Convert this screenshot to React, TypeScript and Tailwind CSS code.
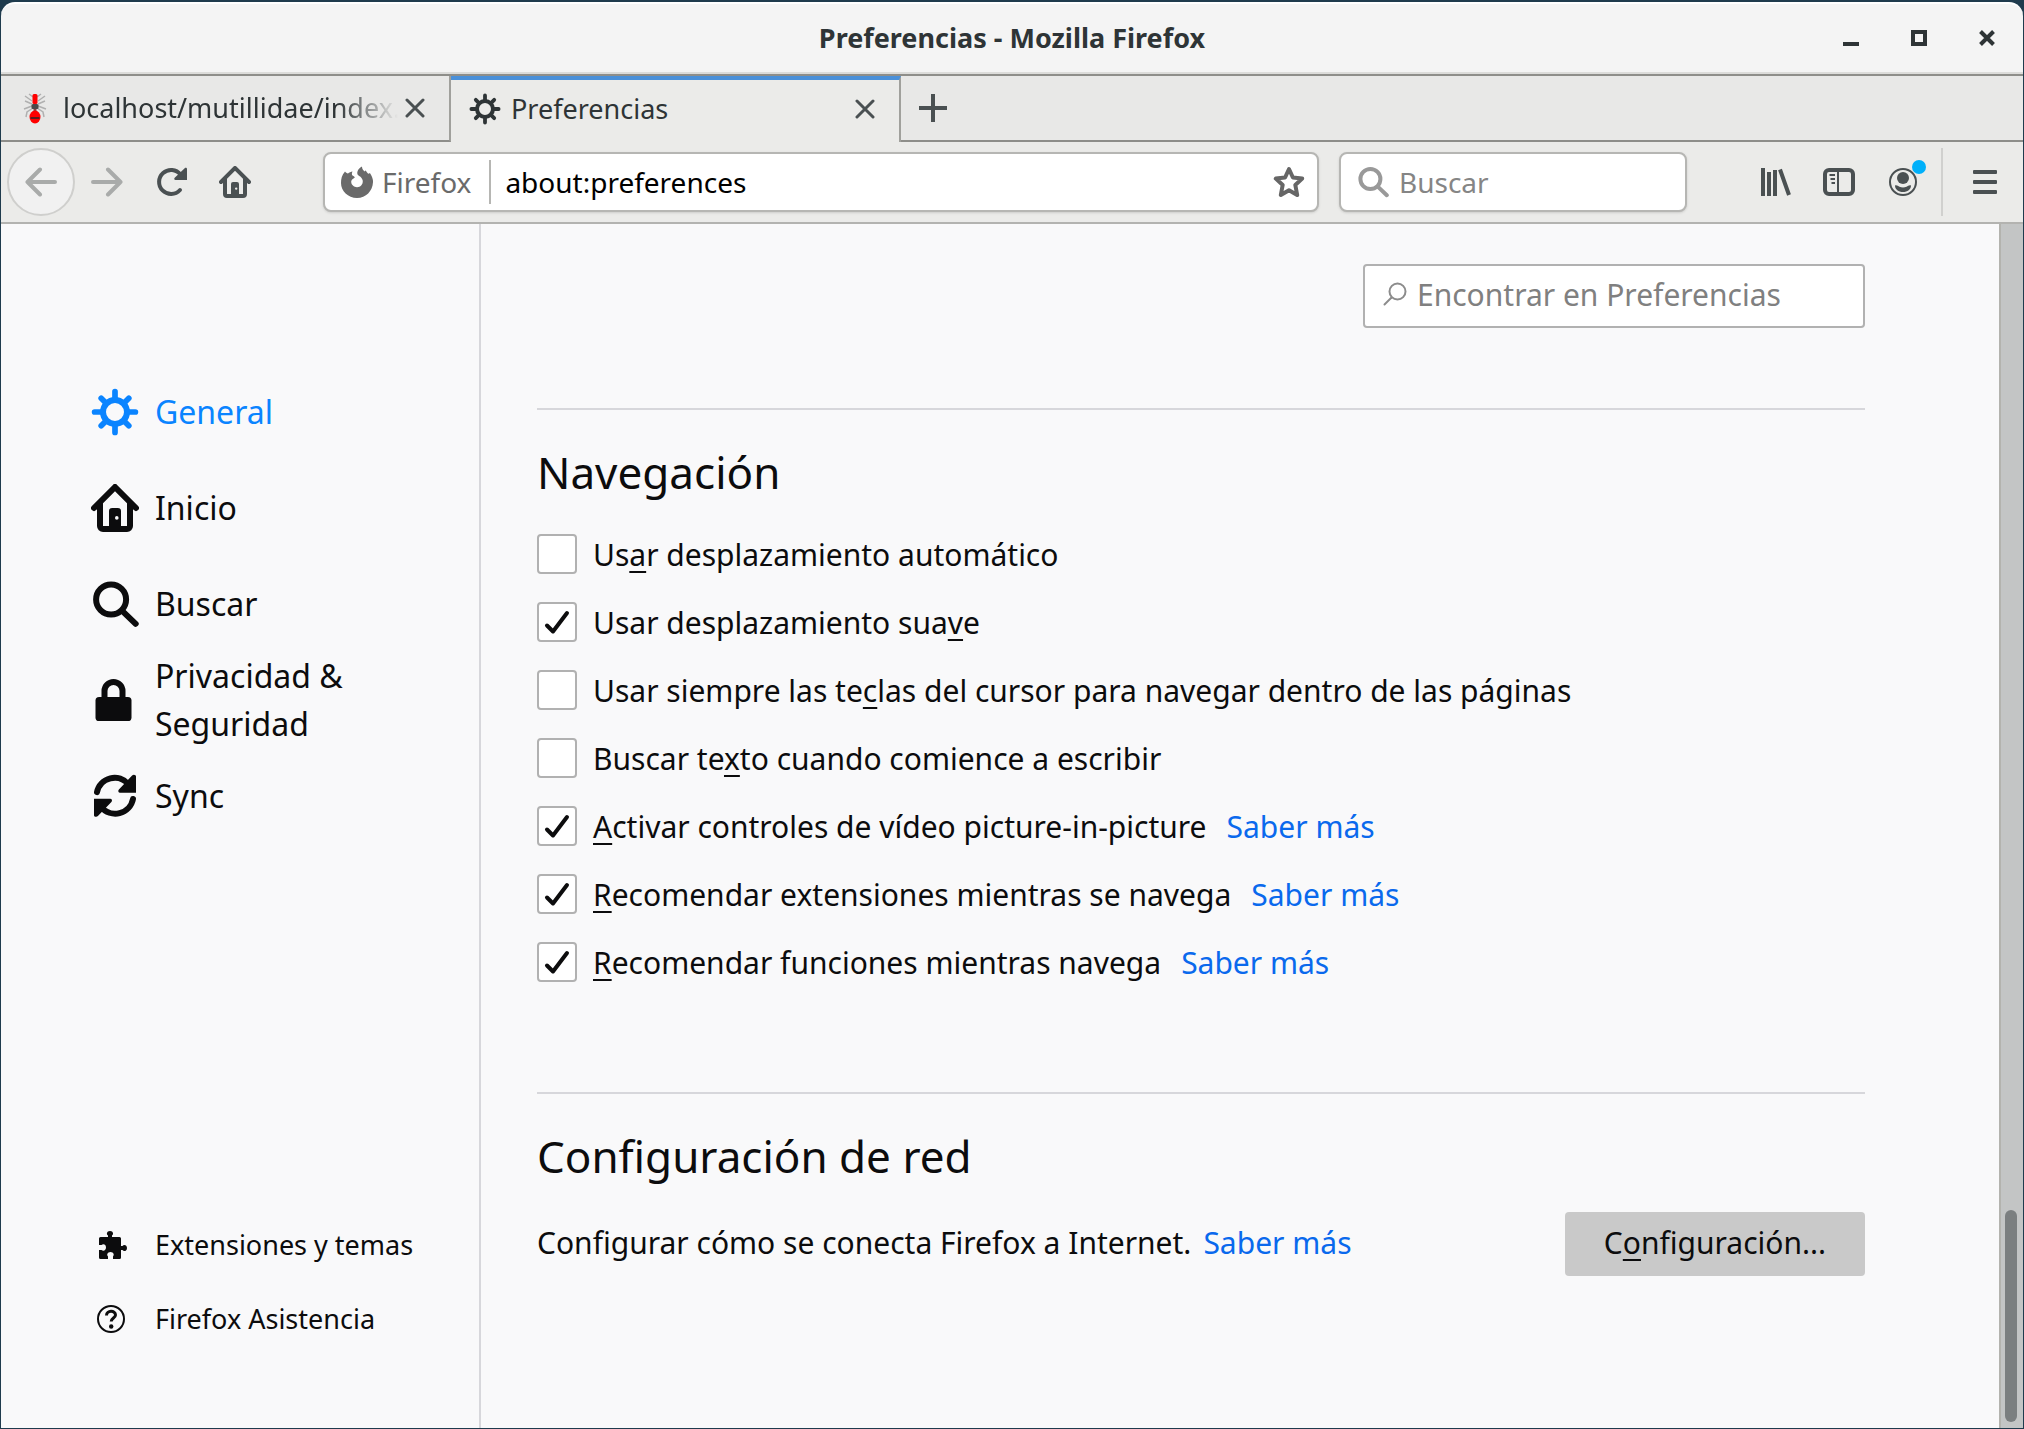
import type { ReactNode } from "react";

type IconProps = { className?: string };

function GearIcon({ className }: IconProps) {
  return (
    <svg viewBox="0 0 16 16" className={className} fill="none" stroke="currentColor" aria-hidden="true">
      <circle cx="8" cy="8" r="4" strokeWidth="2" />
      <path
        d="M8 1.2v2.3M8 12.5v2.3M1.2 8h2.3M12.5 8h2.3M3.4 3.4l1.5 1.5M11.1 11.1l1.5 1.5M3.4 12.6l1.5-1.5M11.1 4.9l1.5-1.5"
        strokeWidth="1.9"
        strokeLinecap="round"
      />
    </svg>
  );
}

function HomeIcon({ className }: IconProps) {
  return (
    <svg viewBox="0 0 16 16" className={className} fill="currentColor" aria-hidden="true">
      <path
        fillRule="evenodd"
        d="M15.707 7.293l-7-7a1 1 0 0 0-1.414 0l-7 7a1 1 0 0 0 1.414 1.414L2 8.414V14a2 2 0 0 0 2 2h8a2 2 0 0 0 2-2V8.414l.293.293a1 1 0 0 0 1.414-1.414zM12 14h-2V9a1 1 0 0 0-1-1H7a1 1 0 0 0-1 1v5H4V6.414l4-4 4 4zM8.6 10.7a.6.6 0 1 1 0 1.2.6.6 0 0 1 0-1.2z"
      />
    </svg>
  );
}

function SearchIcon({ className }: IconProps) {
  return (
    <svg viewBox="0 0 16 16" className={className} fill="none" stroke="currentColor" strokeWidth="2" strokeLinecap="round" aria-hidden="true">
      <circle cx="6.7" cy="6.5" r="5" />
      <path d="M10.4 10.3L14.9 14.6" />
    </svg>
  );
}

function LockIcon({ className }: IconProps) {
  return (
    <svg viewBox="0 0 16 16" className={className} aria-hidden="true">
      <rect x="1.5" y="7" width="12" height="8" rx="1.2" fill="currentColor" />
      <path d="M4.500 8V5a3 3 0 0 1 6 0V8" fill="none" stroke="currentColor" strokeWidth="2" />
    </svg>
  );
}

function SyncIcon({ className }: IconProps) {
  return (
    <svg viewBox="0 0 16 16" className={className} fill="none" stroke="currentColor" strokeWidth="2" aria-hidden="true">
      <path d="M2 6.700a6 6 0 0 1 10.500-2.600" strokeLinecap="round" />
      <path d="M14 9a6 6 0 0 1-10.600 2.600" strokeLinecap="round" />
      <path d="M15 1.500v5.400H9.700c-.6 0-.8-.7-.4-1.100l4.400-4.600c.5-.5 1.300-.2 1.300.3z" fill="currentColor" stroke="none" />
      <path d="M1 14.400V8.900h5.400c.6 0 .8.700.4 1.100l-4.500 4.700c-.5.5-1.300.2-1.300-.3z" fill="currentColor" stroke="none" />
    </svg>
  );
}

function PuzzleIcon({ className }: IconProps) {
  return (
    <svg viewBox="0 0 28 28" className={className} fill="currentColor" aria-hidden="true">
      <path d="M9 6V4.500C7.200 3.500 7.500 0 11 0s3.800 3.500 2 4.500V6h7.500A1.500 1.500 0 0 1 22 7.500V15h1.500c1-1.800 4.500-1.500 4.500 2s-3.500 3.800-4.500 2H22v7.500a1.500 1.500 0 0 1-1.500 1.500H14v-2.500c1.600-1.600.6-4.500-2.500-4.500s-4.100 2.900-2.500 4.500V28H1.500A1.500 1.500 0 0 1 0 26.500V19h2.500C4.400 20.500 7 19.500 7 16.500S4.400 12.500 2.500 14H0V7.500A1.500 1.500 0 0 1 1.500 6z" />
    </svg>
  );
}

function HelpIcon({ className }: IconProps) {
  return (
    <svg viewBox="0 0 28 28" className={className} fill="none" stroke="currentColor" aria-hidden="true">
      <circle cx="14" cy="14" r="13" strokeWidth="2" />
      <path d="M9.500 10.500c0-5.500 9-5.500 9-.5 0 3-4.300 3-4.300 6.500" strokeWidth="3" />
      <circle cx="14.200" cy="21.500" r="2.200" fill="currentColor" stroke="none" />
    </svg>
  );
}

function ArrowIcon({ className }: IconProps) {
  return (
    <svg viewBox="0 0 32 32" className={className} fill="none" stroke="currentColor" strokeWidth="4" strokeLinecap="round" strokeLinejoin="round" aria-hidden="true">
      <path d="M30 16H2.500M15 3.500L2.500 16 15 28.500" />
    </svg>
  );
}

function ReloadIcon({ className }: IconProps) {
  return (
    <svg viewBox="0 0 32 32" className={className} fill="none" stroke="currentColor" strokeWidth="4" strokeLinecap="round" aria-hidden="true">
      <path d="M25 24a12 12 0 1 1 .5-15.500" />
      <path d="M32 3.500V14H20.500c-1.200 0-1.700-1.400-.8-2.200l10-9.500c.9-.9 2.300-.3 2.300.7z" fill="currentColor" stroke="none" />
    </svg>
  );
}

function FirefoxIcon({ className }: IconProps) {
  return (
    <svg viewBox="0 0 32 32" className={className} fill="currentColor" aria-hidden="true">
      <path
        fillRule="evenodd"
        d="M4 5.500c.8 1.200 1.800 1.800 3 2C8.200 6.300 9.800 5.600 11.500 5.400c-.7 1.300-.8 2.600-.3 3.800 1.200.6 2.100 1.200 2.700 2.100-1 1.500-3.500 2-3.700 4.200-.2 3.300 2.800 5.800 6 5.700 3.500-.2 6-3.200 5.500-6.600-.3-2-1.700-3.600-3.500-4.600-2-1-2.200-2.500-1.700-4.500C17 3.500 18.600 1.700 21 .5c0 2 .9 3.500 2.500 4.900.5-.4.900-.7 1.200-.9.700 1.100 1.600 2.200 2.500 3.300.8-.2 1.300-.5 1.700-.9 2 3 3.300 6 3.100 9.300C31.500 25 25 32 16 32S0 25 0 17c0-3.900.8-8.200 4-11.500z"
      />
    </svg>
  );
}

function AntIcon({ className }: IconProps) {
  return (
    <svg viewBox="0 0 24 32" className={className} aria-hidden="true">
      <path
        d="M10 5L6 2M14 5l4-3M9 9L2 4M15 9l7-5M9 12l-7-3M15 12l7-3M9 14l-8 3M15 14l8 3M10 16l-6 4-1 5M14 16l6 4 1 5"
        fill="none"
        stroke="#b0b0b0"
        strokeWidth="1.500"
      />
      <rect x="9.500" y="2" width="5" height="10" rx="1.500" fill="#f00" />
      <rect x="8.500" y="12" width="7" height="5" rx="1.500" fill="#4a4a4a" />
      <path d="M10.500 17h3v2h-3z" fill="#8a4040" />
      <ellipse cx="12" cy="25" rx="5.500" ry="6.500" fill="#f00" />
      <path d="M7.500 26h9" stroke="#5a2020" strokeWidth="2" />
    </svg>
  );
}

function CrossIcon({ className }: IconProps) {
  return (
    <svg viewBox="0 0 20 20" className={className} fill="none" stroke="currentColor" strokeWidth="3" strokeLinecap="round" aria-hidden="true">
      <path d="M2 2l16 16M18 2L2 18" />
    </svg>
  );
}

function StarIcon({ className }: IconProps) {
  return (
    <svg viewBox="0 0 32 32" className={className} fill="none" stroke="currentColor" strokeWidth="4" strokeLinejoin="round" aria-hidden="true">
      <path d="M16 3l3.900 8.500 9.300 1.100-6.900 6.300 1.900 10.100L16 24.200 7.800 29l1.900-10.100-6.900-6.300 9.300-1.100z" />
    </svg>
  );
}

function LibraryIcon({ className }: IconProps) {
  return (
    <svg viewBox="0 0 32 32" className={className} fill="none" stroke="currentColor" strokeWidth="4" aria-hidden="true">
      <path d="M4 2v28M10 6v24M16 4v26M21 3.500l9 25.500" />
    </svg>
  );
}

function SidebarIcon({ className }: IconProps) {
  return (
    <svg viewBox="0 0 32 32" className={className} fill="none" stroke="currentColor" aria-hidden="true">
      <rect x="2" y="4" width="28" height="24" rx="4" strokeWidth="4" />
      <path d="M15 4v24" strokeWidth="2" />
      <path d="M6.500 9H12M7.500 13H12M8.500 17H12" strokeWidth="2" />
    </svg>
  );
}

function AccountIcon({ className }: IconProps) {
  return (
    <svg viewBox="0 0 28 28" className={className} aria-hidden="true">
      <circle cx="14" cy="14" r="13" fill="none" stroke="currentColor" strokeWidth="2" />
      <circle cx="14" cy="10" r="6" fill="currentColor" />
      <path d="M6 17.500c1.500-1 3 .5 4.500 1.200 2 1 5 1 7 0 1.500-.7 3-2.200 4.500-1.200 0 4-3.500 6.500-8 6.500s-8-2.500-8-6.500z" fill="currentColor" />
    </svg>
  );
}

const chromeIconButton = "flex size-16 shrink-0 items-center justify-center text-[#4a5052]";

function TitleBar() {
  return (
    <header className="grid h-[72px] grid-cols-[1fr_auto_1fr] items-center rounded-t-[14px] border-t-2 border-b-2 border-t-white border-b-[#dcdcda] bg-[#f4f4f4]">
      <span />
      <h1 className="text-[27px] font-bold text-[#2e3436]">Preferencias - Mozilla Firefox</h1>
      <div className="flex justify-end gap-1 pr-1 text-[#2e3436]">
        <button aria-label="Minimizar" className="flex size-16 items-center justify-center">
          <span className="mt-3 h-1 w-4 bg-current" />
        </button>
        <button aria-label="Maximizar" className="flex size-16 items-center justify-center">
          <span className="size-4 border-4 border-current" />
        </button>
        <button aria-label="Cerrar" className="flex size-16 items-center justify-center">
          <svg viewBox="0 0 16 16" className="size-4" stroke="currentColor" strokeWidth="4" aria-hidden="true">
            <path d="M1.500 1.500l13 13M14.500 1.500l-13 13" />
          </svg>
        </button>
      </div>
    </header>
  );
}

function TabStrip() {
  return (
    <div className="flex h-[68px] border-t-2 border-[#8e8e8a] bg-[#e8e8e7] text-[27px] text-[#2e3436]">
      <div className="flex w-[450px] items-center border-r-2 border-b-2 border-r-[#a0a09c] border-b-[#8e8e8a] pr-6 pl-[22px]">
        <AntIcon className="h-8 w-6 shrink-0" />
        <span className="ml-4 flex-1 whitespace-nowrap [mask-image:linear-gradient(to_right,black_80%,transparent_98%)]">
          localhost/mutillidae/index.
        </span>
        <button aria-label="Cerrar pestaña" className="shrink-0 text-[#4a5052]">
          <CrossIcon className="size-5" />
        </button>
      </div>
      <div className="flex w-[450px] items-center border-t-4 border-r-2 border-t-[#4a90d9] border-r-[#a0a09c] bg-[#ebebe9] pr-6 pb-1 pl-[18px]">
        <GearIcon className="size-8 shrink-0" />
        <span className="ml-[10px] flex-1">Preferencias</span>
        <button aria-label="Cerrar pestaña" className="text-[#4a5052]">
          <CrossIcon className="size-5" />
        </button>
      </div>
      <div className="flex flex-1 items-center border-b-2 border-[#8e8e8a]">
        <button aria-label="Nueva pestaña" className="flex h-full w-16 items-center justify-center text-[#4a5052]">
          <svg viewBox="0 0 28 28" className="size-7" stroke="currentColor" strokeWidth="4" aria-hidden="true">
            <path d="M14 0v28M0 14h28" />
          </svg>
        </button>
      </div>
    </div>
  );
}

function NavBar() {
  return (
    <div className="flex h-[82px] items-center border-b-2 border-[#b3b3b0] bg-[#ebebe9] pl-[6px] text-[28px]">
      <button aria-label="Atrás" className="flex size-[68px] shrink-0 items-center justify-center rounded-full border-2 border-[#cfcfcd] bg-[#f1f1f1] text-[#a9abaa]">
        <ArrowIcon className="size-8" />
      </button>
      <button aria-label="Adelante" className="flex size-16 shrink-0 items-center justify-center text-[#a9abaa]">
        <ArrowIcon className="size-8 rotate-180" />
      </button>
      <button aria-label="Recargar" className={chromeIconButton}>
        <ReloadIcon className="size-8" />
      </button>
      <button aria-label="Inicio" className={chromeIconButton}>
        <HomeIcon className="size-8" />
      </button>
      <div className="ml-14 flex h-[60px] flex-1 items-center rounded-lg border-2 border-[#b6b6b3] bg-white shadow-sm">
        <button className="flex items-center gap-[9px] pl-4 text-[#6a6a6a]">
          <FirefoxIcon className="size-8" />
          Firefox
        </button>
        <span className="ml-[18px] h-11 w-[2px] bg-[#b6b6b3]" />
        <input aria-label="Dirección" defaultValue="about:preferences" className="ml-[14px] min-w-0 flex-1 bg-transparent text-black outline-none" />
        <button aria-label="Añadir a marcadores" className="pr-3 text-[#666]">
          <StarIcon className="size-8" />
        </button>
      </div>
      <label className="ml-5 flex h-[60px] w-[348px] items-center gap-[10px] rounded-lg border-2 border-[#b6b6b3] bg-white pl-4 text-[#999] shadow-sm">
        <SearchIcon className="size-8 shrink-0" />
        <input aria-label="Buscar en la web" placeholder="Buscar" className="min-w-0 flex-1 bg-transparent text-black outline-none placeholder:text-[#858585]" />
      </label>
      <div className="ml-14 flex items-center">
        <button aria-label="Biblioteca" className={chromeIconButton}>
          <LibraryIcon className="size-8" />
        </button>
        <button aria-label="Barra lateral" className={chromeIconButton}>
          <SidebarIcon className="size-8" />
        </button>
        <button aria-label="Cuenta" className={`${chromeIconButton} relative`}>
          <AccountIcon className="size-7" />
          <span className="absolute top-[10px] right-[9px] size-[14px] rounded-full bg-[#00b0fa]" />
        </button>
        <span className="ml-[6px] h-[68px] w-[2px] bg-[#d0d0ce]" />
        <button aria-label="Abrir menú" className="mr-[6px] ml-[10px] flex size-16 flex-col items-center justify-center gap-[6px] text-[#4a5052]">
          <span className="h-1 w-6 rounded-[1px] bg-current" />
          <span className="h-1 w-6 rounded-[1px] bg-current" />
          <span className="h-1 w-6 rounded-[1px] bg-current" />
        </button>
      </div>
    </div>
  );
}

const categories: { label: string; icon: ReactNode; active?: boolean }[] = [
  { label: "General", icon: <GearIcon className="size-12" />, active: true },
  { label: "Inicio", icon: <HomeIcon className="size-12" /> },
  { label: "Buscar", icon: <SearchIcon className="size-12" /> },
  { label: "Privacidad & Seguridad", icon: <LockIcon className="size-12" /> },
  { label: "Sync", icon: <SyncIcon className="size-12" /> },
];

function Sidebar() {
  return (
    <aside className="flex w-[480px] shrink-0 flex-col justify-between border-r-2 border-[#d7d7db] pt-[140px] pb-[72px]">
      <nav className="flex flex-col text-[32px] leading-[48px]">
        {categories.map((c) => (
          <a
            key={c.label}
            href="#"
            className={`flex h-24 items-center gap-4 pl-[90px] ${c.active ? "text-[#0a84ff]" : "text-[#0c0c0d]"}`}
          >
            <span className="shrink-0">{c.icon}</span>
            <span className="w-[220px]">{c.label}</span>
          </a>
        ))}
      </nav>
      <div className="flex flex-col text-[27px]">
        <a href="#" className="flex h-[74px] items-center gap-7 pl-[98px]">
          <PuzzleIcon className="size-7" />
          Extensiones y temas
        </a>
        <a href="#" className="flex h-[74px] items-center gap-[30px] pl-24">
          <HelpIcon className="size-7" />
          Firefox Asistencia
        </a>
      </div>
    </aside>
  );
}

const linkClass = "text-[#0a69ed]";

// The access key is the underlined letter that sits between `before` and `after`.
type Option = { id: string; before: string; accessKey: string; after: string; checked: boolean; more?: boolean };

const options: Option[] = [
  { id: "autoscroll", before: "Us", accessKey: "a", after: "r desplazamiento automático", checked: false },
  { id: "smooth", before: "Usar desplazamiento sua", accessKey: "v", after: "e", checked: true },
  { id: "cursor", before: "Usar siempre las te", accessKey: "c", after: "las del cursor para navegar dentro de las páginas", checked: false },
  { id: "typing", before: "Buscar te", accessKey: "x", after: "to cuando comience a escribir", checked: false },
  { id: "pip", before: "", accessKey: "A", after: "ctivar controles de vídeo picture-in-picture", checked: true, more: true },
  { id: "extensions", before: "", accessKey: "R", after: "ecomendar extensiones mientras se navega", checked: true, more: true },
  { id: "features", before: "", accessKey: "R", after: "ecomendar funciones mientras navega", checked: true, more: true },
];

function AccessKey({ children }: { children: string }) {
  return <u className="decoration-2 underline-offset-[5px] [text-decoration-skip-ink:none]">{children}</u>;
}

function OptionRow({ option }: { option: Option }) {
  return (
    <div className="flex h-[68px] items-center">
      <span className="relative size-10 shrink-0">
        <input
          id={option.id}
          type="checkbox"
          defaultChecked={option.checked}
          className="peer block size-10 appearance-none rounded-[4px] border-2 border-[#b1b1b1] bg-white"
        />
        <svg
          viewBox="0 0 40 40"
          className="pointer-events-none absolute inset-0 hidden size-10 peer-checked:block"
          fill="none"
          stroke="#0c0c0d"
          strokeWidth="4"
          strokeLinecap="round"
          strokeLinejoin="round"
          aria-hidden="true"
        >
          <path d="M10 23.500l6 6L30 11" />
        </svg>
      </span>
      <label htmlFor={option.id} className="ml-4 whitespace-nowrap">
        {option.before}
        <AccessKey>{option.accessKey}</AccessKey>
        {option.after}
      </label>
      {option.more && (
        <a href="#" className={`ml-5 whitespace-nowrap ${linkClass}`}>
          Saber más
        </a>
      )}
    </div>
  );
}

function Preferences() {
  return (
    <main className="min-w-0 flex-1 pt-10 pr-[134px] pl-14 text-[30px] text-[#0c0c0d]">
      <div className="flex max-w-[1328px] flex-col">
        <label className="flex h-16 w-[502px] items-center gap-[10px] self-end rounded-[4px] border-2 border-[#b1b1b1] bg-white pb-1 pl-[18px] text-[#8c8c8c]">
          <svg viewBox="0 0 24 24" className="size-6 shrink-0" fill="none" stroke="currentColor" strokeWidth="2" strokeLinecap="round" aria-hidden="true">
            <circle cx="14.500" cy="9.500" r="8" />
            <path d="M8.500 15.500L1.500 22.500" />
          </svg>
          <input
            aria-label="Encontrar en Preferencias"
            placeholder="Encontrar en Preferencias"
            className="min-w-0 flex-1 bg-transparent outline-none placeholder:text-[#808080]"
          />
        </label>

        <section className="mt-20 border-t-2 border-[#d7d7db] pt-8">
          <h2 className="text-[44px] leading-[60px]">Navegación</h2>
          <div className="mt-[18px]">
            {options.map((o) => (
              <OptionRow key={o.id} option={o} />
            ))}
          </div>
        </section>

        <section className="mt-24 border-t-2 border-[#d7d7db] pt-8">
          <h2 className="text-[44px] leading-[60px]">Configuración de red</h2>
          <div className="mt-[26px] flex items-center justify-between">
            <p className="pb-1">
              Configurar cómo se conecta Firefox a Internet.
              <a href="#" className={`ml-3 ${linkClass}`}>
                Saber más
              </a>
            </p>
            <button className="h-16 w-[300px] rounded-[4px] bg-[#c9c9c9] pb-1">
              C<AccessKey>o</AccessKey>nfiguración...
            </button>
          </div>
        </section>
      </div>
    </main>
  );
}

export default function App() {
  return (
    <div className="flex min-h-screen flex-col bg-[#1f3b4d] px-px pt-[2px] pb-px font-['Noto_Sans',sans-serif]">
      <TitleBar />
      <TabStrip />
      <NavBar />
      <div className="flex flex-1 bg-[#f9f9fa] text-[#0c0c0d]">
        <Sidebar />
        <Preferences />
        <div className="flex w-6 shrink-0 flex-col justify-end border-l-2 border-[#b3b3ae] bg-[#c3c5c5] pb-[6px] pl-1">
          <div className="h-[212px] w-3 rounded-full bg-[#7b7f80]" />
        </div>
      </div>
    </div>
  );
}
